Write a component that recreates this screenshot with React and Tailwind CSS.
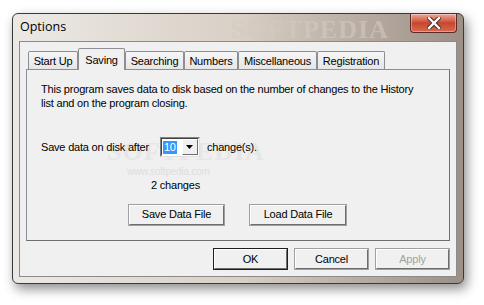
import React from "react";

const font = { fontFamily: '"Liberation Sans", Arial, sans-serif' };

function Tab({ label, w, selected }) {
  if (selected) {
    return (
      <div
        className="relative z-10 -mb-px flex h-[22px] items-start justify-center rounded-t-[2px] border border-b-0 border-[#8c8e94] bg-[#f0f0f0] pt-[3px] text-[11px] tracking-[-0.2px] text-black"
        style={{ width: w }}
      >
        {label}
      </div>
    );
  }
  return (
    <div
      className="flex h-[18px] items-center justify-center rounded-t-[2px] border border-b-0 border-[#8c8e94] bg-gradient-to-b from-[#f6f6f6] to-[#e6e6e6] pt-px text-[11px] tracking-[-0.2px] text-black"
      style={{ width: w }}
    >
      {label}
    </div>
  );
}

function Btn({ children, w, def, disabled }) {
  return (
    <div
      className={
        "flex h-[22px] items-center justify-center text-[11px] tracking-[-0.2px] " +
        (def ? "border border-[#1e1e1e] " : "border border-[#a0a0a0] ") +
        (disabled ? "text-[#a0a0a0]" : "text-black")
      }
      style={{ width: w }}
    >
      <div className="flex h-full w-full items-center justify-center border border-t-white border-l-white border-r-[#6d6d6d] border-b-[#6d6d6d] bg-[#f0f0f0]">
        {children}
      </div>
    </div>
  );
}

export default function App() {
  return (
    <div className="h-[305px] w-[484px] overflow-hidden bg-white" style={font}>
      <div className="ml-[12px] mt-[13px] flex h-[271px] w-[452px] flex-col rounded-[6px] border border-[#3c3a38] bg-gradient-to-r from-[#ece9e5] via-[#d9d0c6] to-[#9c8f86] shadow-[3px_5px_12px_rgba(0,0,0,0.45)]">
        <div className="relative flex h-[27px] items-start justify-between">
          <div className="pointer-events-none absolute left-[218px] top-[-4px] select-none text-[26px] font-bold tracking-[1px] text-[#d3cac1] opacity-60" style={{ fontFamily: '"Liberation Serif", serif' }}>
            SOFTPEDIA
          </div>
          <div className="relative pl-[7px] pt-[4px] text-[12.5px] text-black" style={{ fontFamily: '"Open Sans", "Noto Sans", sans-serif' }}>
            Options
          </div>
          <div className="relative mr-[6px] flex h-[19px] w-[47px] items-center justify-center rounded-b-[4px] border border-t-0 border-[#5b2a22] bg-gradient-to-b from-[#eba999] via-[#c9452d] to-[#d86a50] shadow-[inset_0_0_0_1px_rgba(255,255,255,0.35)]">
            <svg width="14" height="12" viewBox="0 0 14 12">
              <path d="M2 1 L12 11 M12 1 L2 11" stroke="#3a2a28" strokeWidth="4.2" strokeLinecap="square" />
              <path d="M2 1 L12 11 M12 1 L2 11" stroke="#ffffff" strokeWidth="2.4" strokeLinecap="square" />
            </svg>
          </div>
        </div>
        <div className="mx-[6px] mb-[6px] flex flex-1 flex-col border border-[#8a8a8a] bg-[#f0f0f0] px-[6px] pt-[6px]">
          <div className="flex h-[21px] items-end pl-[2px]">
            <Tab label="Start Up" w={50} />
            <Tab label="Saving" w={47} selected />
            <Tab label="Searching" w={59} />
            <Tab label="Numbers" w={54} />
            <Tab label="Miscellaneous" w={79} />
            <Tab label="Registration" w={68} />
          </div>
          <div className="relative flex h-[172px] flex-col border border-t-[#8c8e94] border-l-[#8c8e94] border-r-[#6e6e6e] border-b-[#6e6e6e] bg-[#f0f0f0] pl-[14px] pt-[12px] text-[11px] tracking-[-0.2px] text-black">
            <div className="pointer-events-none absolute left-[80px] top-[62px] select-none text-[26px] font-bold tracking-[1px] text-[#e6e6e6]" style={{ fontFamily: '"Liberation Serif", serif' }}>
              SOFTPEDIA
            </div>
            <div className="pointer-events-none absolute left-[100px] top-[94px] select-none text-[10px] text-[#dedede]">
              www.softpedia.com
            </div>
            <div className="relative leading-[14px]">
              This program saves data to disk based on the number of changes to the History
              <br />
              list and on the program closing.
            </div>
            <div className="relative mt-[27px] flex items-center">
              <span>Save data on disk after</span>
              <div className="ml-[11px] flex h-[20px] w-[40px] items-center border border-t-[#828282] border-l-[#828282] border-r-[#e0e0e0] border-b-[#e0e0e0] bg-white">
                <div className="flex h-full flex-1 items-center border border-t-[#404040] border-l-[#404040] border-r-white border-b-white pl-[1px]">
                  <span className="bg-[#3399ff] px-[1px] leading-[13px] text-white">10</span>
                  <div className="ml-auto flex h-full w-[16px] items-center justify-center border border-t-white border-l-white border-r-[#6d6d6d] border-b-[#6d6d6d] bg-[#f0f0f0]">
                    <svg width="7" height="4" viewBox="0 0 7 4"><path d="M0 0 H7 L3.5 4 Z" fill="#000" /></svg>
                  </div>
                </div>
              </div>
              <span className="ml-[7px]">change(s).</span>
            </div>
            <div className="relative mt-[20px] pl-[110px]">2 changes</div>
            <div className="relative mt-[10px] flex gap-[24px] pl-[87px]">
              <Btn w={97}>Save Data File</Btn>
              <Btn w={98}>Load Data File</Btn>
            </div>
          </div>
          <div className="mt-[7px] flex justify-end gap-[6px]">
            <Btn w={75} def>OK</Btn>
            <Btn w={75}>Cancel</Btn>
            <Btn w={75} disabled>Apply</Btn>
          </div>
        </div>
      </div>
    </div>
  );
}
